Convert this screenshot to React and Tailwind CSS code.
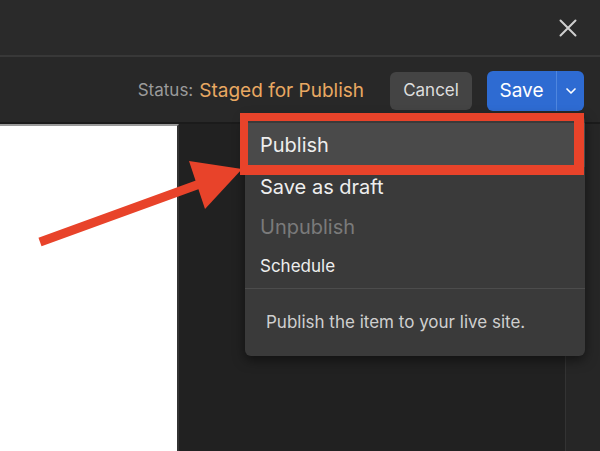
import { ChevronDown } from 'lucide-react';

function CloseIcon() {
  return (
    <svg width="18" height="18" viewBox="0 0 18 18" className="text-[#cfcfcf]">
      <path d="M1.5 1.5 L16.5 16.5 M16.5 1.5 L1.5 16.5" stroke="currentColor" strokeWidth="2" strokeLinecap="round" />
    </svg>
  );
}

function Arrow() {
  return (
    <svg className="absolute left-0 top-0 pointer-events-none" width="600" height="451" viewBox="0 0 600 451">
      <line x1="40" y1="242" x2="205" y2="182" stroke="#e8432a" strokeWidth="9" />
      <polygon points="242,169 189,161 205,209" fill="#e8432a" />
    </svg>
  );
}

export default function App() {
  return (
    <div className="relative w-[600px] h-[451px] overflow-hidden bg-[#212121] font-['Inter',sans-serif] flex flex-col">
      <div className="h-[57px] shrink-0 bg-[#2a2a2a] border-b-2 border-[#383838] flex items-center justify-end pr-[23px]">
        <CloseIcon />
      </div>
      <div className="h-[67px] shrink-0 bg-[#282828] border-b-2 border-[#1b1b1b] flex items-center justify-end pr-[16px] pt-[3px]">
        <span className="text-[17px] text-[#9b9b9b] mr-[6px]">Status:</span>
        <span className="text-[19px] text-[#e9a862] mr-[26px]">Staged for Publish</span>
        <button className="h-[38px] w-[82px] rounded-[6px] bg-[#444444] text-[17px] text-[#dedede] mr-[15px]">Cancel</button>
        <div className="h-[40px] w-[97px] rounded-[6px] bg-[#2e6bd2] flex items-stretch text-white">
          <span className="flex-1 flex items-center justify-center text-[19px] border-r border-[#4f86de]">Save</span>
          <span className="w-[27px] flex items-center justify-center">
            <ChevronDown size={16} strokeWidth={2.5} />
          </span>
        </div>
      </div>
      <div className="flex-1 flex">
        <div className="w-[179px] bg-white border-t-2 border-[#9a9a9a] border-r-2 border-r-[#333333]" />
        <div className="flex-1 bg-[#212121]" />
        <div className="w-[35px] bg-[#262626] border-l border-[#333333]" />
      </div>

      <div className="absolute left-[245px] top-[115px] w-[340px] h-[241px] rounded-[6px] bg-[#3a3a3a] shadow-[0_4px_12px_rgba(0,0,0,0.5)] flex flex-col pt-[8px]">
        <div className="h-[44px] bg-[#4a4a4a] flex items-center pl-[15px] text-[20px] text-[#eeeeee]">Publish</div>
        <div className="h-[40px] flex items-center pl-[15px] text-[20px] text-[#eeeeee]">Save as draft</div>
        <div className="h-[40px] flex items-center pl-[15px] text-[20px] text-[#7a7a7a]">Unpublish</div>
        <div className="h-[39px] flex items-center pl-[15px] text-[17px] text-[#eeeeee]">Schedule</div>
        <div className="h-px bg-[#4c4c4c] mt-[2px]" />
        <div className="flex-1 flex items-center pl-[21px] text-[17px] text-[#cfcfcf]">Publish the item to your live site.</div>
      </div>

      <div className="absolute left-[240px] top-[113px] w-[344px] h-[62px] border-[#e8432a] border-l-[8px] border-t-[8px] border-r-[10px] border-b-[10px]" />
      <Arrow />
    </div>
  );
}
